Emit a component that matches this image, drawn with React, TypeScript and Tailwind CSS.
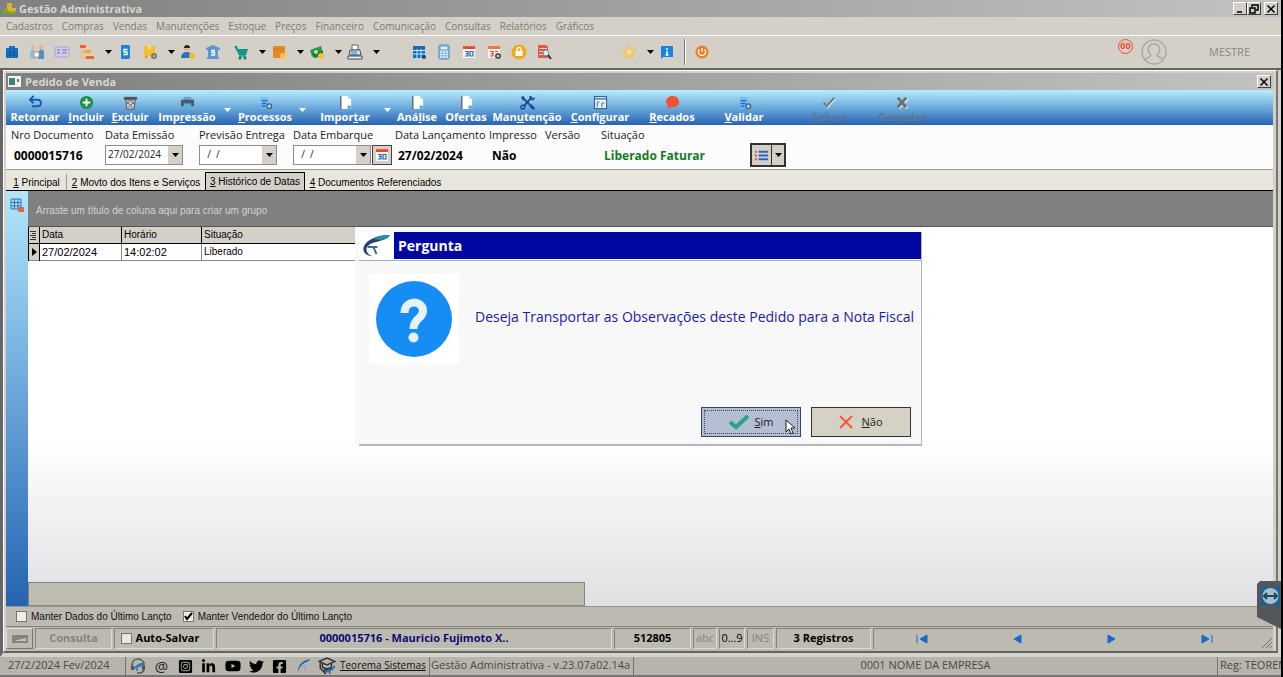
import type { ReactNode } from 'react'
import { FaFacebookSquare, FaInstagramSquare, FaLinkedinIn, FaTwitter, FaYoutube } from 'react-icons/fa'

const menus = ['Cadastros', 'Compras', 'Vendas', 'Manutenções', 'Estoque', 'Preços', 'Financeiro', 'Comunicação', 'Consultas', 'Relatórios', 'Gráficos']

function Svg({ size = 16, children }: { size?: number; children: ReactNode }) {
  return (
    <svg width={size} height={size} viewBox="0 0 16 16" fill="none" className="shrink-0" aria-hidden="true">
      {children}
    </svg>
  )
}

const icons: Record<string, ReactNode> = {
  company: <><path d="M2 4h3V2h6v2h3v10H2z" fill="#1675c4" /><path d="M2 8h12M2 11h12M6 4v10M10 4v10" stroke="#0c559b" /></>,
  people: <><circle cx="4" cy="3" r="2" fill="#e8b48c" /><circle cx="12" cy="3" r="2" fill="#e8b48c" /><path d="M1 15V7l3-2 3 3v7z" fill="#8fbfe0" /><path d="M9 15V8l3-3 3 2v8z" fill="#4a8fd0" /><path d="M5 8h5v5H5z" fill="#fff" stroke="#d88a5a" /></>,
  card: <><rect x="1" y="3" width="14" height="10" rx="1" fill="#cfcdea" stroke="#a8a3d6" /><path d="M3 6h3M3 9h3M8 6h5M8 9h5" stroke="#736fb4" /></>,
  tree: <><rect x="1" y="1" width="6" height="3" fill="#f0622d" /><rect x="5" y="6" width="7" height="3" fill="#f5a829" /><rect x="7" y="12" width="8" height="3" fill="#f0622d" /><path d="M3 4v10h4M3 8h2" stroke="#f5b560" /></>,
  phone: <><rect x="4" y="1" width="9" height="14" rx="1" fill="#1887dc" /><path d="M10.500 5.500H7v2.500h3v2.500H6.500" stroke="#fff" strokeWidth="1.300" /></>,
  boxGear: <><path d="M2 2h11v10H2z" fill="#f8c02c" /><path d="M6 2h3v3H6z" fill="#fbe08a" /><circle cx="4" cy="13" r="1.500" fill="#e69a20" /><circle cx="12" cy="12" r="2" stroke="#777" strokeWidth="2" /></>,
  seller: <><circle cx="7" cy="4" r="3" fill="#efb27c" /><path d="M4 4c0-4 6-4 6 0z" fill="#222" /><path d="M1 14c0-5 3-6 6-6s5 2 5 6z" fill="#1d76c5" /><circle cx="12" cy="12" r="3" fill="#f7b92f" /></>,
  bank: <><path d="M1 4l7-3 7 3v2H1zM2 13h12v2H2zM3 6h10v7H3z" fill="#5b97d6" /><path d="M10 6.500H7v2h2.500v2.500H6" stroke="#fff" strokeWidth="1.300" /></>,
  cart: <><path d="M1 2h3l1 3h10l-2 6H6z" fill="#109688" /><path d="M6 12h7" stroke="#109688" strokeWidth="1.500" /><circle cx="7" cy="14" r="1.500" fill="#14776e" /><circle cx="12" cy="14" r="1.500" fill="#14776e" /></>,
  box: <><rect x="2" y="2" width="12" height="12" fill="#e58a2b" /><path d="M2 5h12" stroke="#d47a22" /><circle cx="12" cy="12" r="3" fill="#fac33a" /></>,
  money: <><path d="M1 6l11-4 2 7-11 4z" fill="#2b9a45" /><path d="M3 9l11-2v5l-9 2z" fill="#187a35" /><circle cx="7" cy="8" r="2" fill="#b5e2b8" /><circle cx="12" cy="12" r="3" fill="#f2c13a" /></>,
  register: <><path d="M5 1h6v5H5z" fill="#fff" stroke="#567" /><path d="M3 6h10l1 5H2z" fill="#cfe0ee" stroke="#456" /><path d="M4 8h6M4 10h6" stroke="#3b83c4" /><path d="M1 12h14v3H1z" fill="#eef3f7" stroke="#444" /></>,
  table: <><rect x="2" y="2" width="12" height="12" fill="#0f6fc4" /><path d="M2 6.500h12M2 10h12M6 5v9M10 5v9" stroke="#cfe6fa" /><circle cx="13" cy="13" r="2" fill="#0a4c8c" /></>,
  calculator: <><rect x="3" y="1" width="10" height="14" rx="1" fill="#8fc0e4" stroke="#4b8fc0" /><path d="M5 3h6v2H5z" fill="#e8f5fd" /><path d="M4 8h8M4 10.500h8M4 13h8" stroke="#fff" strokeDasharray="2 1" /></>,
  gearDate: <><path d="M2 3h12v11H2z" fill="#f3f3f3" /><path d="M2 2h12v3H2z" fill="#f07a34" /><path d="M4 7.500h3v4.500H4M5 9.700h2M9 7.500h3" stroke="#dd4a30" strokeWidth="1.200" /><circle cx="12" cy="12" r="2" stroke="#555" strokeWidth="2" /></>,
  lock: <><circle cx="8" cy="8" r="7.500" fill="#f2a918" /><rect x="4.500" y="7" width="7" height="5" fill="#fff" /><path d="M6 7V5c0-2 4-2 4 0v2" stroke="#fff" strokeWidth="1.300" /></>,
  search: <><path d="M2 1h8l2 2v11H2z" fill="#e2573f" /><path d="M3 4.500h8M3 7.500h8M3 10.500h8" stroke="#fbd0c5" /><circle cx="10" cy="9" r="3" fill="#d6ecfa" stroke="#789" /><path d="M12 11l3 4" stroke="#333" strokeWidth="2" /></>,
  star: <path d="M8 2l1.800 4 4.200.4-3.200 2.900 1 4.200L8 11.300l-3.800 2.200 1-4.200L2 6.400 6.200 6z" fill="#f0dfa4" stroke="#f3c44c" strokeWidth="1.500" />,
  info: <><path d="M2 2h12v11H4l-2 2z" fill="#1584e4" /><path d="M8 4v2M8 7v4M6.500 11h3" stroke="#fff" strokeWidth="1.500" /></>,
  power: <><circle cx="8" cy="8" r="6.500" fill="#ef7d1f" /><path d="M5.500 5.500a3.500 3.500 0 1 0 5 0M8 4v4" stroke="#fff" strokeWidth="1.300" /></>,
  undo: <path d="M2 5h8c5 0 5 7 0 7H4M6 1L2 5l4 4" stroke="#1658b4" strokeWidth="2" />,
  plus: <><circle cx="8" cy="8" r="7" fill="#1b9248" /><path d="M8 4v8M4 8h8" stroke="#fff" strokeWidth="2" /></>,
  trash: <><path d="M1 2h14v3H1z" fill="#555" /><path d="M3 5h10l-1 10H4z" fill="#c9cdd2" stroke="#555" /><path d="M4 7l7 7M8 5l4 5M12 7l-7 7M8 5l-4 5" stroke="#666" /></>,
  printer: <><path d="M4 2h8v4H4z" fill="#68a3c4" /><path d="M1 5h14v7H1z" fill="#4c5a66" /><path d="M4 9h8v5H4z" fill="#58b1df" /></>,
  process: <><path d="M3 2h7l2 3v9H3z" fill="#78bdf3" /><path d="M4 6h6M4 9h5M4 12h4" stroke="#1b6fca" strokeWidth="1.500" /><circle cx="12" cy="12" r="2.500" stroke="#4a6078" strokeWidth="1.500" fill="#b8d8f0" /></>,
  doc: <><path d="M3 1h8l3 3v11H3z" fill="#fff" /><path d="M3 1v14" stroke="#667" strokeWidth="1.500" /><path d="M11 1l3 3h-3z" fill="#9cc" /><circle cx="12" cy="13" r="2" fill="#5caee6" /></>,
  tools: <><path d="M3 3l10 10" stroke="#164b96" strokeWidth="2" /><path d="M13 2L4 12" stroke="#164b96" strokeWidth="2" /><path d="M1 2l3-1 1 3-2 2z" fill="#164b96" /><path d="M11 1v3l3 1 2-2" stroke="#164b96" strokeWidth="1.500" /><circle cx="3" cy="13" r="2" stroke="#164b96" strokeWidth="1.500" /><path d="M11 11l4 4" stroke="#164b96" strokeWidth="3" /></>,
  window: <><rect x="1.500" y="1.500" width="13" height="13" fill="#e8f3fb" stroke="#28537e" /><path d="M2 3h12v2H2z" fill="#4f8fc3" /><path d="M4.500 13V7.500H7M9.500 13V8.500H12" stroke="#45647e" /></>,
  balloon: <path d="M8 1c9 0 9 12 1 12H6l-4 2 1-4C-1 7 2 1 8 1z" fill="#f0532f" />,
  check: <><path d="M3 9l3 4 8-9" stroke="#d5eefa" strokeWidth="2" /><path d="M2 8l3 4 8-9" stroke="#707477" strokeWidth="2" /></>,
  cross: <><path d="M4 4l9 10M13 4L4 14" stroke="#e5f5fc" strokeWidth="3" /><path d="M3 3l9 10M12 3L3 13" stroke="#6c7074" strokeWidth="3" /></>,
}

function Calendar() {
  return (
    <Svg>
      <path d="M2 2h12v12H2z" fill="#f4f8fc" />
      <path d="M2 2h12v3H2z" fill="#e8452f" />
      <path d="M4 1v2M8 1v2M12 1v2" stroke="#f7a698" />
      <path d="M4 7.500h3v4.500H4M5 9.700h2M9 7.500h3v4.500H9z" stroke="#2467b1" strokeWidth="1.200" />
    </Svg>
  )
}

function Arrow({ className = 'text-black' }: { className?: string }) {
  return (
    <svg width="7" height="4" viewBox="0 0 7 4" className={`shrink-0 ${className}`} aria-hidden="true">
      <path d="M0 0h7L3.500 4z" fill="currentColor" />
    </svg>
  )
}

// Underlines the accelerator letter, marked with & as in the resource strings
function Accel({ text }: { text: string }) {
  const i = text.indexOf('&')
  if (i < 0) return <>{text}</>
  return <>{text.slice(0, i)}<u>{text[i + 1]}</u>{text.slice(i + 2)}</>
}

function Swoosh({ size }: { size: number }) {
  return (
    <svg width={size} height={size} viewBox="0 0 30 30" fill="none" aria-hidden="true">
      <path d="M29 3C18 3 8 6 3 13c-4 6 0 12 8 12-6-2-7-6-6-9 3-5 8-5 14-7 4-1 8-3 10-6z" fill="#2b3f73" />
      <path d="M29 3c-6 0-12 1-17 4 3 1 9 2 13 0 2-1 3-2 4-4z" fill="#2191b0" />
      <path d="M6 15.500h10M12 16l3 7" stroke="#3a6a96" strokeWidth="2" />
    </svg>
  )
}

const mainTools = [
  ['company', 'Empresa'], ['people', 'Clientes'], ['card', 'Contatos'], ['tree', 'Plano', 'drop'], ['phone', 'Cobrança'],
  ['boxGear', 'Produtos', 'drop'], ['seller', 'Vendedores'], ['bank', 'Bancos'], ['gap3'], ['cart', 'Vendas', 'drop'], ['box', 'Estoque', 'drop'],
  ['money', 'Financeiro', 'drop'], ['register', 'Caixa', 'drop'], ['gap26'], ['table', 'Tabela'], ['calculator', 'Calculadora'],
  ['calendar', 'Agenda'], ['gearDate', 'Configurar agenda'], ['lock', 'Bloquear'], ['search', 'Pesquisar'], ['gap60'],
  ['star', 'Favoritos', 'drop'], ['info', 'Informações'],
]

function MainToolbar() {
  return (
    <div className="flex h-8 items-center bg-[#d4d0c8]">
      {mainTools.map(([icon, label, drop]) => {
        if (icon === 'gap3') return <span key={icon} className="w-[3px]" />
        if (icon === 'gap26') return <span key={icon} className="w-[26px]" />
        if (icon === 'gap60') return <span key={icon} className="w-[60px]" />
        return (
          <span key={icon} className="flex">
            <button aria-label={label} className="flex w-[25px] items-center justify-center pr-px">
              {icon === 'calendar' ? <Calendar /> : <Svg>{icons[icon]}</Svg>}
            </button>
            {drop && <button aria-label={`Mais ${label}`} className="flex w-[13px] items-center justify-center pl-[3px]"><Arrow /></button>}
          </span>
        )
      })}
      <span className="mx-1 h-[26px] w-0.5 border-l border-[#777] bg-white" />
      <button aria-label="Sair" className="flex w-[23px] justify-center"><Svg>{icons.power}</Svg></button>
      <div className="ml-auto flex items-center pr-[31px] text-[11px] text-[#8b8880]">
        <span className="mr-2 mb-3 flex size-[15px] items-center justify-center rounded-full border border-[#ee4b33] text-[9px] font-bold text-[#ee4b33]">00</span>
        <svg width="26" height="26" viewBox="0 0 26 26" fill="none" stroke="#aaa9a4" strokeWidth="1.500" className="mr-[42px]" aria-hidden="true">
          <circle cx="13" cy="13" r="12" />
          <path d="M4 21c1-3 6-2 6-5-4-3-4-11 3-11s7 8 3 11c0 3 5 2 6 5" />
        </svg>
        MESTRE
      </div>
    </div>
  )
}

const orderTools = [
  { icon: 'undo', label: 'Retornar', w: 'w-[58px]' },
  { icon: 'plus', label: '&Incluir', w: 'w-[44px]' },
  { icon: 'trash', label: '&Excluir', w: 'w-[44px]' },
  { icon: 'printer', label: 'Imp&ressão', w: 'w-[70px]', drop: true },
  { icon: 'process', label: '&Processos', w: 'w-[64px]', drop: true },
  { icon: 'doc', label: 'Impor&tar', w: 'w-[74px]', drop: true },
  { icon: 'doc', label: 'Aná&lise', w: 'w-[48px]' },
  { icon: 'doc', label: 'Ofertas', w: 'w-[50px]' },
  { icon: 'tools', label: 'Man&utenção', w: 'w-[72px]' },
  { icon: 'window', label: '&Configurar', w: 'w-[74px]' },
  { icon: 'balloon', label: '&Recados', w: 'w-[70px]' },
  { icon: 'process', label: '&Validar', w: 'w-[74px]' },
  { icon: 'check', label: '&Salvar', w: 'w-[96px]', off: true },
  { icon: 'cross', label: 'Cancelar', w: 'w-[50px]', off: true },
]

function OrderToolbar() {
  return (
    <div className="flex h-[35px] shrink-0 bg-linear-to-b from-[#b9ecfc] via-[#6dabdc] to-[#2963b2] text-[11px] leading-[14px] font-bold text-white">
      {orderTools.map((t) => (
        <div key={t.label} className="flex">
          <button disabled={t.off} className={`${t.w} flex flex-col items-center justify-between whitespace-nowrap pt-[5px] pb-px ${t.off ? 'text-[#587594]' : ''}`}>
            <Svg size={15}>{icons[t.icon]}</Svg>
            <span><Accel text={t.label} /></span>
          </button>
          {t.drop && <button aria-label="Mais opções" className="flex w-[11px] items-center justify-center pt-1"><Arrow className="text-white" /></button>}
        </div>
      ))}
    </div>
  )
}

function DateCombo({ id, value }: { id: string; value: string }) {
  return (
    <div className="flex h-5 w-[78px] border border-[#8e8c88] bg-white">
      <input id={id} defaultValue={value} className="w-[62px] min-w-0 px-0.5 text-[10px] text-[#222] outline-none" />
      <button aria-label="Abrir calendário" className="flex w-[14px] items-center justify-center bg-[#d4d0c8]"><Arrow /></button>
    </div>
  )
}

function Field({ label, w, id, children }: { label: string; w: string; id?: string; children?: ReactNode }) {
  return (
    <div className={`${w} shrink-0 whitespace-nowrap`}>
      {id ? <label htmlFor={id} className="block h-[19px] leading-[20px]">{label}</label> : <span className="block h-[19px] leading-[20px]">{label}</span>}
      <div className="flex h-[21px] items-center">{children}</div>
    </div>
  )
}

function OrderHeader() {
  return (
    <div className="flex h-[45px] shrink-0 border-b border-[#9c9a94] bg-[#fcfcfd] pl-[5px] text-[11px] text-[#222]">
      <Field label="Nro Documento" w="w-[94px]"><b className="pt-0.5 pl-[3px] text-[12px] text-black">0000015716</b></Field>
      <Field label="Data Emissão" w="w-[94px]" id="emissao"><DateCombo id="emissao" value="27/02/2024" /></Field>
      <Field label="Previsão Entrega" w="w-[94px]" id="entrega"><DateCombo id="entrega" value="  /  /" /></Field>
      <Field label="Data Embarque" w="w-[102px]" id="embarque">
        <DateCombo id="embarque" value="  /  /" />
        <button aria-label="Agenda de embarque" className="ml-px flex size-5 items-center justify-center border border-[#444] bg-[#d4d0c8]"><Calendar /></button>
      </Field>
      <Field label="Data Lançamento" w="w-[94px]"><b className="pt-0.5 pl-[3px] text-[12px] text-black">27/02/2024</b></Field>
      <Field label="Impresso" w="w-[56px]"><b className="pt-0.5 pl-[3px] text-[12px] text-black">Não</b></Field>
      <Field label="Versão" w="w-[56px]" />
      <Field label="Situação" w="w-[149px]"><b className="pt-0.5 pl-[3px] text-[12px] text-[#147a1c]">Liberado Faturar</b></Field>
      <div className="mt-[18px] flex h-6 w-9 border-2 border-[#333] bg-[#d4d0c8]">
        <button aria-label="Lista" className="flex flex-1 items-center justify-center border-r border-[#333]">
          <Svg size={15}>
            <path d="M1 4h2M1 8h2M1 12h2" stroke="#d8563a" strokeWidth="2" />
            <path d="M5 4h10M5 8h10M5 12h10" stroke="#2c64c0" strokeWidth="2" />
          </Svg>
        </button>
        <button aria-label="Opções da lista" className="flex w-3 items-center justify-center"><Arrow /></button>
      </div>
    </div>
  )
}

const tabs = [
  { label: '&1 Principal', w: 'w-[60px] border-r border-r-[#999]' },
  { label: '&2 Movto dos Itens e Serviços', w: 'w-[138px]' },
  { label: '&3 Histórico de Datas', w: 'w-[100px]', active: true },
  { label: '&4 Documentos Referenciados', w: 'w-[141px]' },
]

function Tabs() {
  return (
    <div role="tablist" className="flex h-[21px] shrink-0 items-end border-b border-black bg-[#e8e5dc] pl-[1px] font-['Liberation_Sans',sans-serif] text-[10px] text-black">
      {tabs.map((t) => (
        <button
          key={t.label}
          role="tab"
          aria-selected={!!t.active}
          className={`${t.w} flex items-center justify-center whitespace-nowrap ${t.active ? 'h-[18px] border border-b-0 border-black bg-[#d4d0c8]' : 'h-4'}`}
        >
          <span><Accel text={t.label} /></span>
        </button>
      ))}
    </div>
  )
}

function DatesGrid() {
  return (
    <div className="flex min-h-0 flex-1">
      <div className="flex w-[22px] shrink-0 justify-center bg-linear-to-b from-[#b4e6fa] via-[#69a5d9] to-[#2563b0] pt-1.5">
        <Svg>
          <path d="M2 2h10v10H2zM2 5.500h10M2 9h10M5.500 2v10M9 2v10" stroke="#2d6fb5" />
          <rect x="9" y="10" width="6" height="5" fill="#e2664b" />
        </Svg>
      </div>
      <div className="flex min-w-0 flex-1 flex-col bg-linear-to-b from-white from-60% to-[#e0dfe2] font-['Liberation_Sans',sans-serif] text-[10px] text-black">
        <div className="h-9 shrink-0 border-b border-[#555] bg-[#808080] pt-[13px] pl-2 leading-[14px] text-[#d2d2d2]">Arraste um título de coluna aqui para criar um grupo</div>
        <table className="w-[360px] table-fixed border-collapse text-left leading-[14px]">
          <thead>
            <tr className="h-4 border-b border-black bg-[#d4d0c8]">
              <th className="w-[11px] border-r border-l border-black">
                <svg width="8" height="10" viewBox="0 0 8 10" stroke="#333" aria-label="Colunas"><path d="M1 1.500h6M3 3.500h4M1 5.500h6M3 7.500h4M1 9.500h6" /></svg>
              </th>
              <th className="w-[82px] border-r border-black pt-px pl-0.5 font-normal">Data</th>
              <th className="w-[80px] border-r border-black pt-px pl-0.5 font-normal">Horário</th>
              <th className="pt-px pl-0.5 font-normal">Situação</th>
            </tr>
          </thead>
          <tbody>
            <tr className="h-[17px] border-b border-[#888] bg-white">
              <td className="border-r border-l border-black bg-[#d4d0c8] pl-[3px]"><svg width="5" height="8" viewBox="0 0 5 8" aria-hidden="true"><path d="M0 0l5 4-5 4z" /></svg></td>
              <td className="border-r border-[#888] pl-0.5 text-[11px]">27/02/2024</td>
              <td className="border-r border-[#888] pl-0.5 text-[11px]">14:02:02</td>
              <td className="pl-0.5">Liberado</td>
            </tr>
          </tbody>
        </table>
        <div className="mt-auto h-6 w-[557px] border border-[#85837f] bg-[#bebbb1]" />
      </div>
    </div>
  )
}

function Cell({ className, children }: { className: string; children?: ReactNode }) {
  return (
    <div className={`${className} flex h-[21px] shrink-0 items-center justify-center border border-t-[#85837d] border-r-[#dedbd5] border-b-[#dedbd5] border-l-[#85837d] whitespace-nowrap`}>
      {children}
    </div>
  )
}

const navs = [
  { label: 'Primeiro', d: 'M2 3v8M12 3v8L5 7z' },
  { label: 'Anterior', d: 'M11 3v8L4 7z' },
  { label: 'Próximo', d: 'M3 3v8l7-4z' },
  { label: 'Último', d: 'M12 3v8M2 3v8l7-4z' },
]

function RecordBar() {
  return (
    <div className="flex h-[25px] shrink-0 items-center gap-0.5 border-t border-[#85837d] bg-[#bdbab1] pb-px text-[11px] font-bold text-black">
      <button aria-label="Painel" className="flex h-[21px] w-[27px] items-center justify-center border border-t-[#dedbd5] border-r-[#77756f] border-b-[#77756f] border-l-[#dedbd5]">
        <svg width="16" height="8" viewBox="0 0 16 8" aria-hidden="true"><path d="M0 0h16v8H0z" fill="#85837d" /><path d="M2 6h12V3z" fill="#c9c6bf" /></svg>
      </button>
      <Cell className="w-[77px] text-[#85837d]">Consulta</Cell>
      <Cell className="w-[100px]">
        <label className="flex items-center gap-1 pr-2"><input type="checkbox" className="size-[11px] appearance-none border border-[#77756f] bg-[#e9e7e2]" />Auto-Salvar</label>
      </Cell>
      <Cell className="w-[396px] text-[#0d0b72]">0000015716 - Mauricio Fujimoto X..</Cell>
      <Cell className="w-[77px]">512805</Cell>
      <Cell className="w-[24px] font-normal text-[#85837d]">abc</Cell>
      <Cell className="w-[26px] font-normal">0...9</Cell>
      <Cell className="w-[27px] font-normal text-[#85837d]">INS</Cell>
      <Cell className="w-[95px]"><span>3 Registros</span></Cell>
      <div className="flex h-[21px] flex-1 items-center border-t border-l border-[#85837d]">
        {navs.map((n) => (
          <button key={n.label} aria-label={n.label} className="flex w-[95px] justify-center">
            <svg width="14" height="14" viewBox="0 0 14 14" fill="#1668cc" stroke="#1668cc" aria-hidden="true"><path d={n.d} /></svg>
          </button>
        ))}
        <svg width="12" height="12" viewBox="0 0 12 12" stroke="#77756f" className="mt-auto ml-auto" aria-hidden="true"><path d="M1 11L11 1M5 11l6-6M9 11l2-2" /></svg>
      </div>
    </div>
  )
}

function Headset() {
  return (
    <Svg>
      <path d="M2 10V7c0-8 12-8 12 0v3c0 3-2 5-5 5H7" stroke="#555" strokeWidth="1.500" />
      <path d="M1 8h3v4H1zM12 8h3v4h-3z" fill="#555" />
      <path d="M4 11c2-4 5-5 10-6-2 3-5 3-7 4v4" stroke="#2d76b8" strokeWidth="1.500" />
    </Svg>
  )
}

function FooterBar() {
  return (
    <footer className="flex h-5 shrink-0 items-stretch overflow-hidden border-b-2 border-[#777] bg-[#b7b4ab] text-[11px] leading-[16px] whitespace-nowrap text-[#4a4945]">
      <div className="w-[126px] shrink-0 border-r border-[#77756f] pl-2">27/2/2024 Fev/2024</div>
      <nav className="flex w-[213px] shrink-0 items-center text-[15px] text-black *:flex *:flex-1 *:justify-center">
        <a href="#suporte" aria-label="Suporte"><Headset /></a>
        <a href="#email" aria-label="E-mail" className="text-[#222]">@</a>
        <a href="#instagram" aria-label="Instagram"><FaInstagramSquare /></a>
        <a href="#linkedin" aria-label="LinkedIn"><FaLinkedinIn /></a>
        <a href="#youtube" aria-label="YouTube"><FaYoutube size={16} /></a>
        <a href="#twitter" aria-label="Twitter"><FaTwitter /></a>
        <a href="#facebook" aria-label="Facebook"><FaFacebookSquare /></a>
        <a href="#teorema" aria-label="Teorema">
          <Svg>
            <path d="M15 1C7 2 2 6 2 14c2-6 5-9 9-10z" fill="#2a66b4" />
            <path d="M6 9h4M8 9l2 5" stroke="#7fa3cc" />
          </Svg>
        </a>
        <a href="#cursos" aria-label="Cursos">
          <Svg size={18}>
            <path d="M1 4l7-3 7 3-7 3zM4 6v3c2 2 6 2 8 0V6M2 5v5l5 5M5 12l8-1" stroke="#333" strokeWidth="1.300" />
            <path d="M6 13c4 0 7-2 9-5M9 11l2 4" stroke="#2470b8" strokeWidth="1.500" />
          </Svg>
        </a>
      </nav>
      <a href="#sistemas" className="w-[91px] shrink-0 border-r border-[#77756f] pl-px text-[10px] leading-[17px] text-[#111] underline">Teorema Sistemas</a>
      <div className="w-[204px] shrink-0 border-r border-[#77756f] pl-px">Gestão Administrativa - v.23.07a02.14a</div>
      <div className="min-w-0 flex-1 text-center">0001 NOME DA EMPRESA</div>
      <div className="w-16 shrink-0 overflow-hidden border-l border-[#77756f] pl-0.5">Reg: TEOREMA</div>
    </footer>
  )
}

function CaptionButton({ label, d }: { label: string; d: string }) {
  return (
    <button aria-label={label} className="flex h-[13px] w-[14px] items-center justify-center border border-t-white border-r-[#404040] border-b-[#404040] border-l-white bg-[#d4d0c8]">
      <svg width="10" height="10" viewBox="0 0 10 10" fill="none" stroke="#000" strokeWidth="1.500" aria-hidden="true"><path d={d} /></svg>
    </button>
  )
}

const closePath = 'M1.500 1.500l7 7M8.500 1.500l-7 7'

function QuestionDialog() {
  return (
    <div role="dialog" aria-labelledby="dialog-title" className="absolute top-[227px] left-[355px] w-[567px] bg-[#f8f8f8] pt-[5px] pl-1">
      <div className="border-r border-b-2 border-[#b5b5ba]">
        <div className="flex h-[29px] border-b border-[#a9acbd] bg-white">
          <div className="flex w-[35px] items-center justify-center"><Swoosh size={29} /></div>
          <h2 id="dialog-title" className="mb-px flex flex-1 items-center bg-[#0007a0] pl-1 text-[14px] font-bold text-white">Pergunta</h2>
        </div>
        <div className="flex pt-[13px] pl-2.5">
          <div className="flex size-[90px] shrink-0 items-center justify-center bg-white">
            <svg width="76" height="76" viewBox="0 0 76 76" fill="none" aria-hidden="true">
              <circle cx="38" cy="38" r="38" fill="#168df5" />
              <path d="M28.500 32c0-14 18.500-13 18.500-2 0 8-9.500 7-9.500 18" stroke="#e5f3fe" strokeWidth="8" />
              <circle cx="37.500" cy="56.500" r="5" fill="#e5f3fe" />
            </svg>
          </div>
          <p className="pt-[33px] pl-4 text-[14px] leading-5 whitespace-nowrap text-[#1a1aac]">Deseja Transportar as Observações deste Pedido para a Nota Fiscal</p>
        </div>
        <div className="flex justify-end gap-2.5 pt-[43px] pr-2.5 pb-[7px] text-[11px] text-[#222]">
          <button className="relative h-[30px] w-[100px] border border-[#35486a] bg-[#b3bed3] p-0.5">
            <span className="flex size-full items-center justify-center gap-1 border border-dotted border-[#445]">
              <svg width="22" height="16" viewBox="0 0 22 16" fill="none" aria-hidden="true"><path d="M2 8l6 5L20 2" stroke="#26a680" strokeWidth="4" /></svg>
              <span><Accel text="&Sim" /></span>
            </span>
            <svg width="11" height="17" viewBox="0 0 11 17" className="absolute top-[11px] left-[83px]" aria-hidden="true">
              <path d="M1 1v12l3-3 2 5 2-1-2-5h4z" fill="#fff" stroke="#222" />
            </svg>
          </button>
          <button className="flex h-[30px] w-[100px] items-center justify-center gap-2 border border-[#333] bg-[#d6d1c5]">
            <svg width="14" height="14" viewBox="0 0 14 14" aria-hidden="true"><path d="M1 1l12 12M13 1L1 13" stroke="#ef5a3c" strokeWidth="2" /></svg>
            <span><Accel text="&Não" /></span>
          </button>
        </div>
      </div>
    </div>
  )
}

export default function App() {
  return (
    <div className="relative flex h-screen min-h-[600px] flex-col overflow-hidden border-r-2 border-black bg-[#d4d0c8] font-['Open_Sans',sans-serif]">
      <header className="flex h-[17px] shrink-0 items-center bg-linear-to-r from-[#808080] to-[#c2c2c2] pr-[3px] pl-0.5">
        <svg width="15" height="13" viewBox="0 0 15 13" aria-hidden="true">
          <path d="M5 1h5v5h4v6H1V7h4z" fill="#d8b52d" />
          <path d="M1 7h4l3 3 6-1v3H1z" fill="#7ba428" />
        </svg>
        <h1 className="flex-1 pl-0.5 text-[11px] leading-[16px] font-bold text-[#d8d6d0]">Gestão Administrativa</h1>
        <CaptionButton label="Minimizar" d="M2 8h5" />
        <CaptionButton label="Restaurar" d="M3 3V1h6v5H7M1 4h5v5H1z" />
        <span className="w-[3px]" />
        <CaptionButton label="Fechar" d={closePath} />
      </header>
      <nav className="flex h-[19px] shrink-0 items-center gap-[9px] border-b border-white pl-1.5 text-[10px] text-[#7d7b75]">
        {menus.map((m) => <button key={m}>{m}</button>)}
      </nav>
      <MainToolbar />

      <main className="flex min-h-0 flex-1 flex-col border-t-2 border-b-4 border-l-3 border-t-[#65635e] border-b-[#d5d3cd] border-l-[#65656a] pr-[3px]">
        <section className="flex min-h-0 flex-1 flex-col border-t border-r-2 border-b-2 border-l border-t-white border-r-[#77756f] border-b-[#65635e] border-l-white pt-0.5 pr-[3px] pl-0.5">
          <div className="flex h-[17px] shrink-0 items-center bg-linear-to-r from-[#808080] to-[#c2c2c2] pr-0.5 pl-0.5">
            <svg width="13" height="11" viewBox="0 0 13 11" aria-hidden="true"><path d="M0 0h13v11H0z" fill="#f2f2f2" /><path d="M1 2h6v7H1z" fill="#3f8277" /><path d="M9 3h2v3H9z" fill="#678" /></svg>
            <h2 className="flex-1 pl-1 text-[11px] leading-[16px] font-bold text-[#d8d6d0]">Pedido de Venda</h2>
            <CaptionButton label="Fechar pedido" d={closePath} />
          </div>
          <OrderToolbar />
          <OrderHeader />
          <Tabs />
          <DatesGrid />
          <div className="flex h-5 shrink-0 items-center gap-[11px] border-t border-[#99968f] bg-[#bdbab1] pl-2.5 font-['Liberation_Sans',sans-serif] text-[10px] text-[#111]">
            <label className="flex items-center gap-1"><input type="checkbox" className="size-[11px] appearance-none border border-[#77756f] bg-[#efeeea]" />Manter Dados do Último Lançto</label>
            <label className="flex items-center gap-1">
              <span className="grid size-[11px]">
                <input type="checkbox" defaultChecked className="peer col-start-1 row-start-1 size-[11px] appearance-none border border-[#77756f] bg-[#efeeea]" />
                <svg width="11" height="11" viewBox="0 0 11 11" fill="none" stroke="#000" strokeWidth="2" className="pointer-events-none invisible col-start-1 row-start-1 peer-checked:visible" aria-hidden="true"><path d="M2 5l2 3 5-6" /></svg>
              </span>
              Manter Vendedor do Último Lançto
            </label>
          </div>
          <RecordBar />
        </section>
      </main>
      <FooterBar />

      <QuestionDialog />
      <button aria-label="Acesso remoto" className="absolute right-0 bottom-[48px] h-12 w-6">
        <svg width="24" height="48" viewBox="0 0 24 48" fill="none" aria-hidden="true">
          <path d="M3 0h21v48L0 36V3z" fill="#55565a" />
          <path d="M4 6h19v18H4z" fill="#13649a" />
          <circle cx="13.500" cy="15" r="8" fill="#aebcc5" />
          <path d="M8 15h11M10 12l-3 3 3 3M17 12l3 3-3 3" stroke="#13486f" strokeWidth="2" />
        </svg>
      </button>
    </div>
  )
}
